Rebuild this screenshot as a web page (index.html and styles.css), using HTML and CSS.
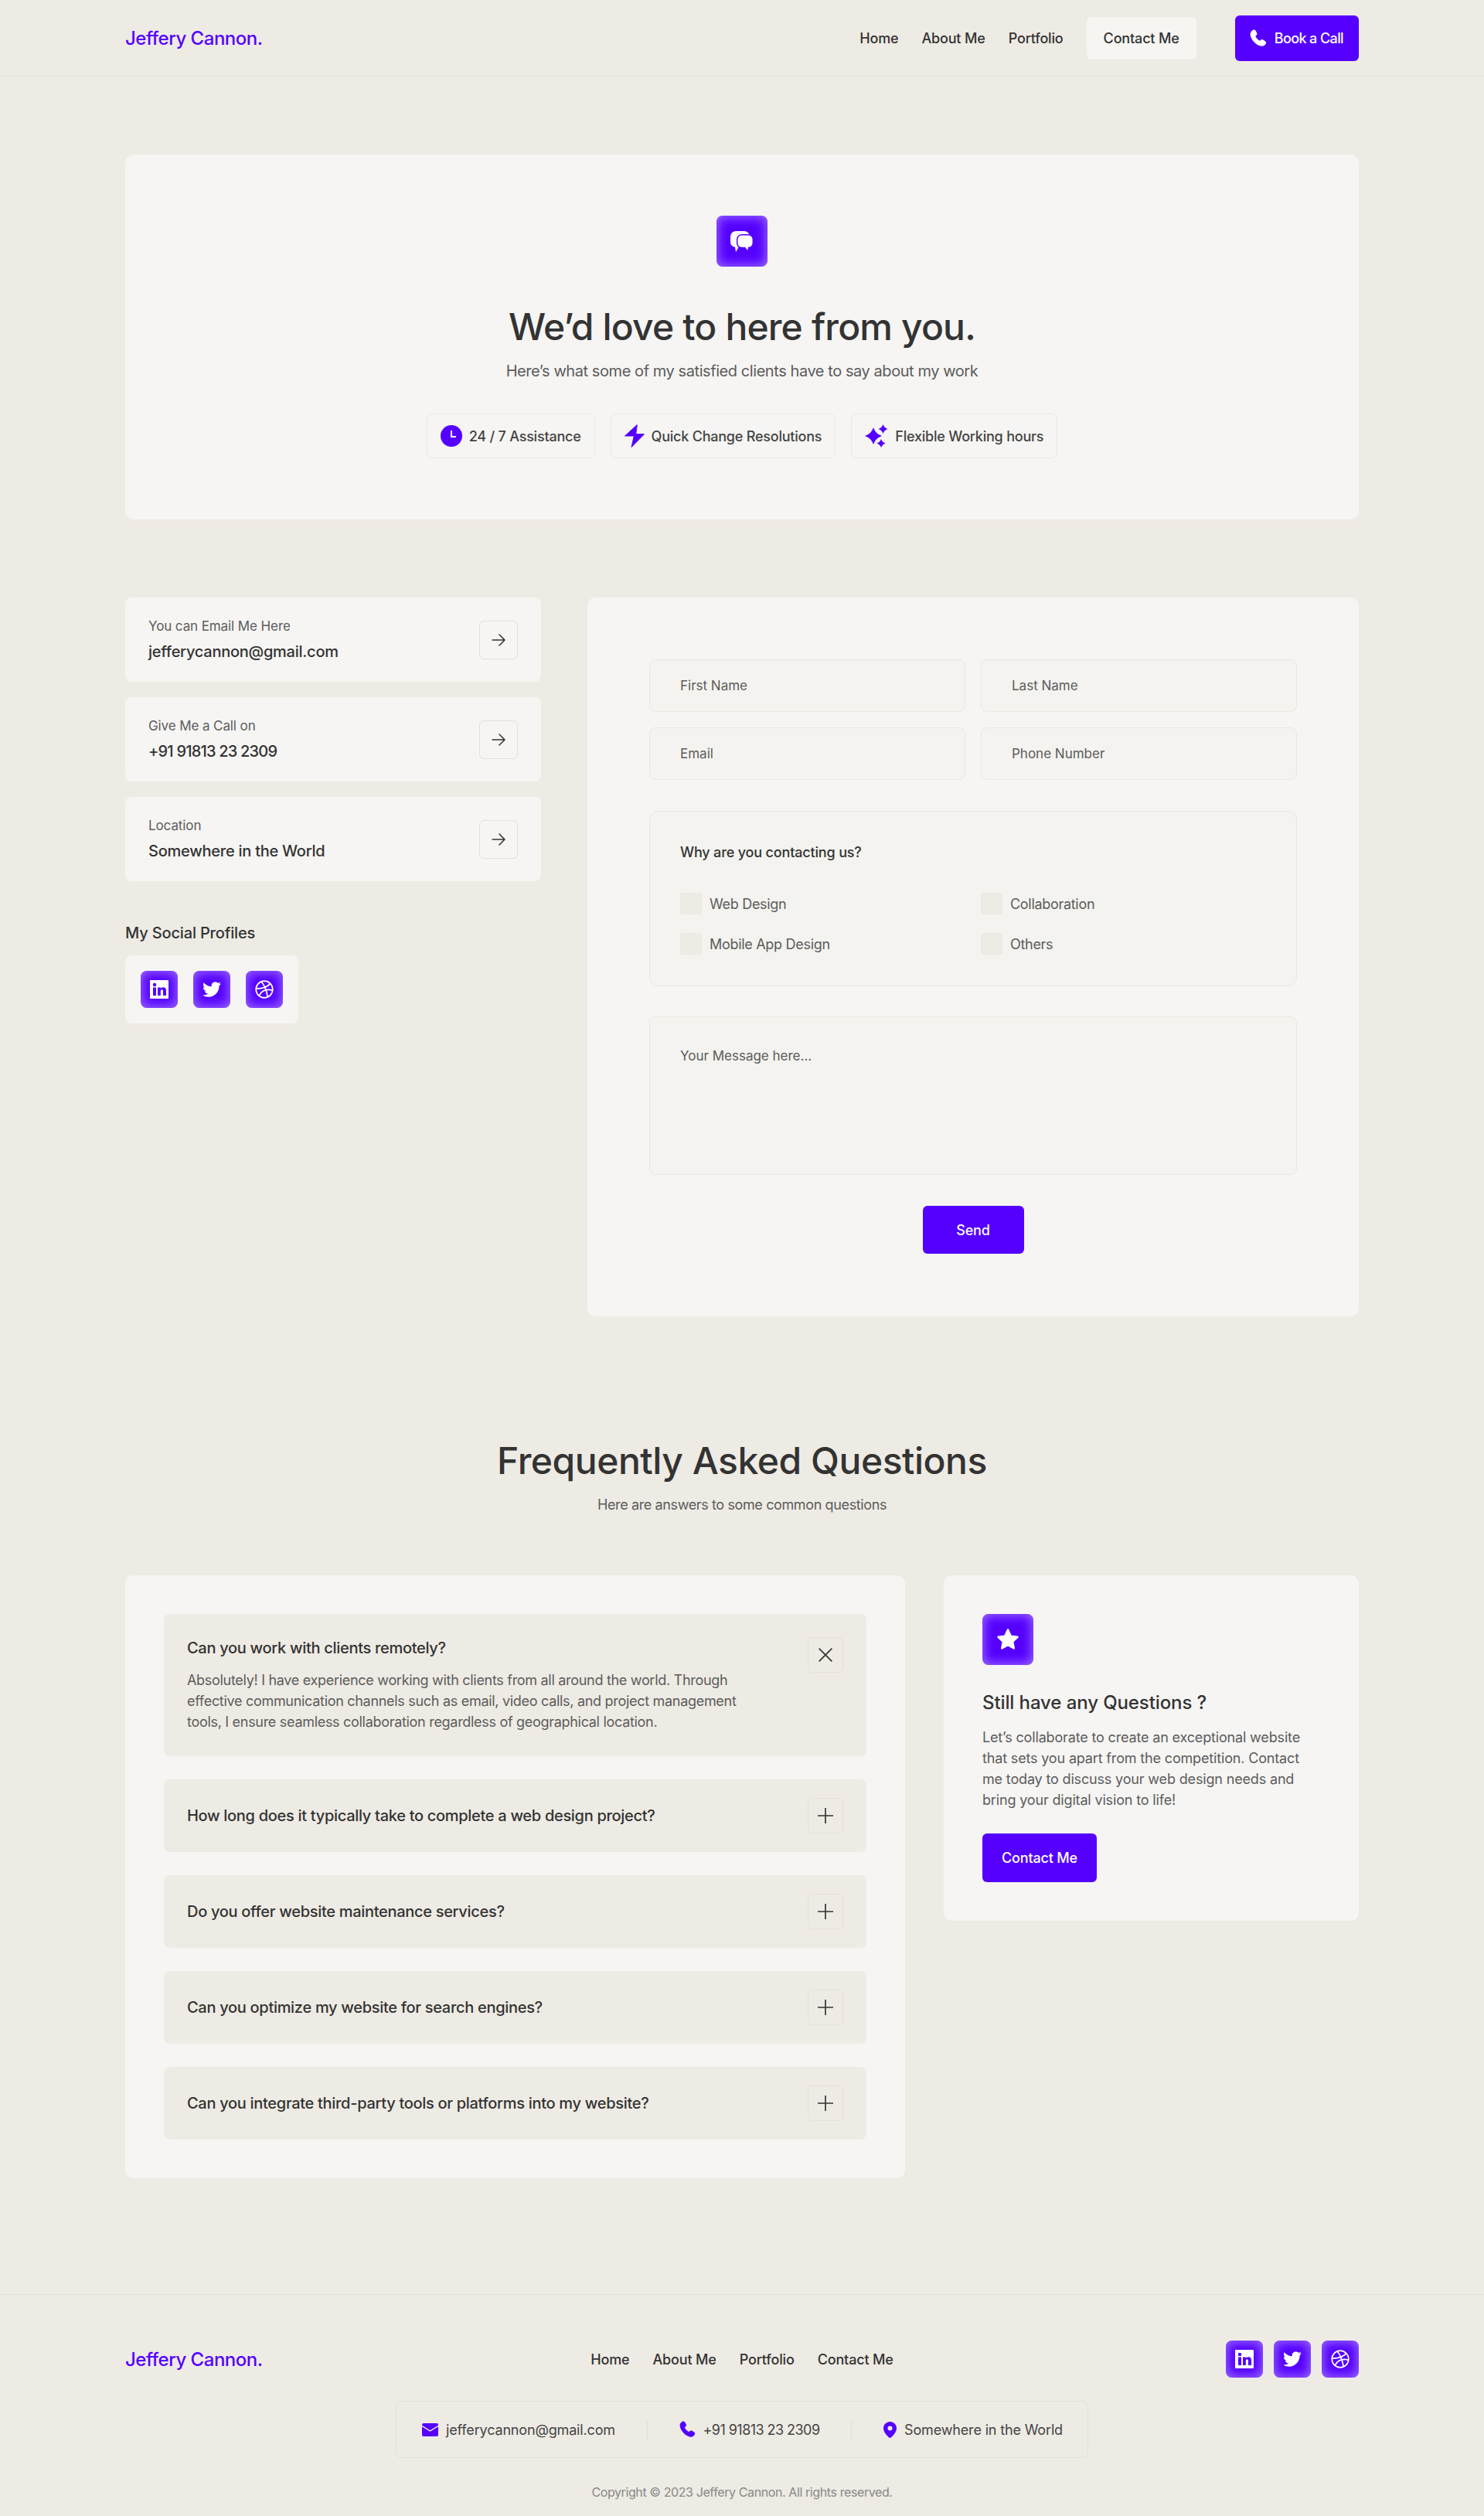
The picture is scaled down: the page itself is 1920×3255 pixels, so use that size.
FILE: index.html
```html
<!DOCTYPE html>
<html lang="en">
<head>
<meta charset="utf-8">
<title>Jeffery Cannon - Contact</title>
<link rel="stylesheet" href="styles.css">
</head>
<body>
<svg class="defs" aria-hidden="true">
  <defs>
    <symbol id="phone" viewBox="3 1.500 19 20"><path d="M6.600 2.200c1-.6 2.300-.2 2.900.8l1.300 2.400c.5 1 .3 2.100-.5 2.800l-1.100 1c1 2.100 2.700 4 4.900 5.200l1.100-1c.8-.7 1.800-.8 2.700-.2l2.400 1.500c1 .7 1.300 2 .6 3-1.200 1.900-3 3-5.100 2.600C9.900 19.200 4.600 13.500 3.500 7.700 3.100 5.500 4.600 3.200 6.600 2.200z"/></symbol>
    <symbol id="linkedin" viewBox="0 0 24 24"><rect width="24" height="24" rx="1" fill="#fff"/><g fill="#5500ff"><circle cx="6" cy="6" r="2.300"/><rect x="4" y="9.500" width="4" height="10.500"/><path d="M10 9.500h3.800v1.500c.7-1.100 2-1.800 3.400-1.800 2.800 0 3.800 1.800 3.800 4.500V20h-4v-5.600c0-1.300-.4-2.100-1.500-2.100-1.200 0-1.700.9-1.700 2.100V20H10z"/></g></symbol>
    <symbol id="twitter" viewBox="0 0 24 24"><path fill="#fff" d="M23.953 4.570a10 10 0 01-2.825.775 4.958 4.958 0 002.163-2.723c-.951.555-2.005.959-3.127 1.184a4.920 4.920 0 00-8.384 4.482C7.690 8.095 4.067 6.130 1.640 3.162a4.822 4.822 0 00-.666 2.475c0 1.710.870 3.213 2.188 4.096a4.904 4.904 0 01-2.228-.616v.060a4.923 4.923 0 003.946 4.827 4.996 4.996 0 01-2.212.085 4.936 4.936 0 004.604 3.417 9.867 9.867 0 01-6.102 2.105c-.390 0-.779-.023-1.170-.067a13.995 13.995 0 007.557 2.209c9.053 0 13.998-7.496 13.998-13.985 0-.210 0-.420-.015-.630A9.935 9.935 0 0024 4.590z"/></symbol>
    <symbol id="dribbble" viewBox="0 0 24 24"><g fill="none" stroke="#fff" stroke-width="1.700"><circle cx="12" cy="12" r="10.800"/><path d="M8 1.800c4 4.700 7 11.500 8.200 20"/><path d="M19.800 4.400c-3.200 4-9 6.600-18.300 6.800"/><path d="M22.700 13.200c-6.700-1.700-13.800-.2-17.500 7"/></g></symbol>
    <symbol id="arrow" viewBox="0 0 18 18"><path d="M1 9h16M10 2l7 7-7 7" fill="none" stroke="#333" stroke-width="1.500" stroke-linecap="round" stroke-linejoin="round"/></symbol>
    <symbol id="plus" viewBox="0 0 18 18"><path d="M9 0v18M0 9h18" fill="none" stroke="#333" stroke-width="1.500"/></symbol>
    <symbol id="close" viewBox="0 0 18 18"><path d="M1.500 1.500l15 15M16.500 1.500l-15 15" fill="none" stroke="#333" stroke-width="1.500"/></symbol>
  </defs>
</svg>

<header class="topbar">
  <a class="logo">Jeffery Cannon.</a>
  <nav class="topnav">
    <a class="navlink">Home</a>
    <a class="navlink">About Me</a>
    <a class="navlink">Portfolio</a>
    <a class="navlink navlink-active">Contact Me</a>
  </nav>
  <a class="bookbtn"><svg class="book-ico"><use href="#phone" fill="#fff"/></svg>Book a Call</a>
</header>

<main class="page">
  <section class="hero">
    <div class="tile tile-lg">
      <svg class="chat-ico" viewBox="0 0 30 27"><path fill="#fff" d="M7 0h11a7 7 0 017 7v7a7 7 0 01-7 7h-7.500L7 27l-1-6.300A7 7 0 010 14V7a7 7 0 017-7z"/><path fill="#fff" stroke="#5500ff" stroke-width="1.500" d="M14.500 4.800h9a5.800 5.800 0 015.800 5.800v5a5.800 5.800 0 01-5.800 5.800l-.6 5.300-4.300-5.300h-4.100a5.800 5.800 0 01-5.800-5.800v-5a5.800 5.800 0 015.800-5.800z"/></svg>
    </div>
    <h1 class="hero-title">We’d love to here from you.</h1>
    <p class="hero-sub">Here’s what some of my satisfied clients have to say about my work</p>
    <ul class="chips">
      <li class="chip"><svg class="chip-ico" viewBox="0 0 28 30"><circle cx="14" cy="15" r="14" fill="#5500ff"/><path d="M14 8v8h6" fill="none" stroke="#fff" stroke-width="2"/></svg>24 / 7 Assistance</li>
      <li class="chip"><svg class="chip-ico" viewBox="0 0 26 30"><path fill="#5500ff" stroke="#5500ff" stroke-linejoin="round" d="M16.300.5L.5 15h11.800L9 29.500 25.500 12.700H14.700z"/></svg>Quick Change Resolutions</li>
      <li class="chip"><svg class="chip-ico" viewBox="0 0 30 30"><path fill="#5500ff" d="M11 4Q13.700 12.300 22 15 13.700 17.700 11 26 8.300 17.700 0 15 8.300 12.300 11 4zM23.500 0Q25 4.500 29.500 6 25 7.500 23.500 12 22 7.500 17.500 6 22 4.500 23.500 0zM21 19Q22.400 23 26.500 24.500 22.400 26 21 30 19.600 26 15.500 24.500 19.600 23 21 19z"/></svg>Flexible Working hours</li>
    </ul>
  </section>

  <section class="contact">
    <aside class="contact-side">
      <a class="info">
        <div class="info-text"><span class="info-label">You can Email Me Here</span><span class="info-value">jefferycannon@gmail.com</span></div>
        <span class="iconbtn iconbtn-info"><svg class="arrow-ico"><use href="#arrow"/></svg></span>
      </a>
      <a class="info">
        <div class="info-text"><span class="info-label">Give Me a Call on</span><span class="info-value info-num">+91 91813 23 2309</span></div>
        <span class="iconbtn iconbtn-info"><svg class="arrow-ico"><use href="#arrow"/></svg></span>
      </a>
      <a class="info">
        <div class="info-text"><span class="info-label">Location</span><span class="info-value">Somewhere in the World</span></div>
        <span class="iconbtn iconbtn-info"><svg class="arrow-ico"><use href="#arrow"/></svg></span>
      </a>
      <h2 class="social-head">My Social Profiles</h2>
      <div class="social-box">
        <a class="tile tile-sm"><svg class="soc-ico soc-in"><use href="#linkedin"/></svg></a>
        <a class="tile tile-sm"><svg class="soc-ico"><use href="#twitter"/></svg></a>
        <a class="tile tile-sm"><svg class="soc-ico"><use href="#dribbble"/></svg></a>
      </div>
    </aside>

    <form class="form">
      <div class="form-grid">
        <input class="field" type="text" placeholder="First Name">
        <input class="field" type="text" placeholder="Last Name">
        <input class="field" type="text" placeholder="Email">
        <input class="field" type="text" placeholder="Phone Number">
      </div>
      <fieldset class="reasons">
        <legend class="reasons-title">Why are you contacting us?</legend>
        <div class="reasons-grid">
          <label class="check"><input class="box" type="checkbox">Web Design</label>
          <label class="check"><input class="box" type="checkbox">Collaboration</label>
          <label class="check"><input class="box" type="checkbox">Mobile App Design</label>
          <label class="check"><input class="box" type="checkbox">Others</label>
        </div>
      </fieldset>
      <textarea class="message" placeholder="Your Message here..."></textarea>
      <button class="btn btn-send" type="button">Send</button>
    </form>
  </section>

  <section class="faq">
    <h2 class="faq-title">Frequently Asked Questions</h2>
    <p class="faq-sub">Here are answers to some common questions</p>
    <div class="faq-cols">
      <div class="faq-list">
        <article class="qa qa-open">
          <div class="qa-body">
            <h3 class="q">Can you work with clients remotely?</h3>
            <p class="a">Absolutely! I have experience working with clients from all around the world. Through effective communication channels such as email, video calls, and project management tools, I ensure seamless collaboration regardless of geographical location.</p>
          </div>
          <span class="iconbtn"><svg class="pm-ico"><use href="#close"/></svg></span>
        </article>
        <article class="qa">
          <h3 class="q">How long does it typically take to complete a web design project?</h3>
          <span class="iconbtn"><svg class="pm-ico"><use href="#plus"/></svg></span>
        </article>
        <article class="qa">
          <h3 class="q">Do you offer website maintenance services?</h3>
          <span class="iconbtn"><svg class="pm-ico"><use href="#plus"/></svg></span>
        </article>
        <article class="qa">
          <h3 class="q">Can you optimize my website for search engines?</h3>
          <span class="iconbtn"><svg class="pm-ico"><use href="#plus"/></svg></span>
        </article>
        <article class="qa">
          <h3 class="q">Can you integrate third-party tools or platforms into my website?</h3>
          <span class="iconbtn"><svg class="pm-ico"><use href="#plus"/></svg></span>
        </article>
      </div>
      <aside class="ask">
        <div class="tile tile-lg tile-ask"><svg class="star-ico" viewBox="0 0 24 24"><path fill="#fff" stroke="#fff" stroke-width="2" stroke-linejoin="round" d="M12 2l3 6.500 7 .9-5.100 4.800 1.300 7L12 17.800l-6.200 3.400 1.300-7L2 9.400l7-.9z"/></svg></div>
        <h3 class="ask-title">Still have any Questions ?</h3>
        <p class="ask-text">Let’s collaborate to create an exceptional website that sets you apart from the competition. Contact me today to discuss your web design needs and bring your digital vision to life!</p>
        <button class="btn btn-ask" type="button">Contact Me</button>
      </aside>
    </div>
  </section>
</main>

<footer class="footer">
  <div class="foot-row">
    <a class="logo">Jeffery Cannon.</a>
    <nav class="footnav">
      <a class="footlink">Home</a>
      <a class="footlink">About Me</a>
      <a class="footlink">Portfolio</a>
      <a class="footlink">Contact Me</a>
    </nav>
    <div class="foot-social">
      <a class="tile tile-sm"><svg class="soc-ico soc-in"><use href="#linkedin"/></svg></a>
      <a class="tile tile-sm"><svg class="soc-ico"><use href="#twitter"/></svg></a>
      <a class="tile tile-sm"><svg class="soc-ico"><use href="#dribbble"/></svg></a>
    </div>
  </div>
  <div class="foot-contact">
    <span class="fc"><svg class="fc-ico fc-mail" viewBox="0 0 21 17"><path fill="#5500ff" d="M2 0h17a2 2 0 012 2v13a2 2 0 01-2 2H2a2 2 0 01-2-2V2a2 2 0 012-2z"/><path d="M0 3.500l10.500 6.500L21 3.500" fill="none" stroke="#fff" stroke-width="1.300"/></svg>jefferycannon@gmail.com</span>
    <span class="fc-sep"></span>
    <span class="fc fc-num"><svg class="fc-ico fc-phone"><use href="#phone" fill="#5500ff"/></svg>+91 91813 23 2309</span>
    <span class="fc-sep"></span>
    <span class="fc"><svg class="fc-ico fc-pin" viewBox="0 0 17 21"><path fill="#5500ff" fill-rule="evenodd" d="M8.500 0C13.200 0 17 3.700 17 8.400c0 5.200-5.500 10.600-7.400 12.200-.6.500-1.600.5-2.200 0C5.500 19 0 13.600 0 8.400 0 3.700 3.800 0 8.500 0zm0 5.500a3 3 0 100 6 3 3 0 000-6z"/></svg>Somewhere in the World</span>
  </div>
  <p class="copy">Copyright © 2023 Jeffery Cannon. All rights reserved.</p>
</footer>
</body>
</html>
```

FILE: styles.css
```css
* { box-sizing: border-box; }
html, body { margin: 0; padding: 0; }
body {
  background: #eeebe4;
  color: #333;
  font-family: "Inter", "Liberation Sans", sans-serif;
  font-size: 16px;
  letter-spacing: -0.01em;
}
h1, h2, h3, p, ul { margin: 0; padding: 0; }
ul { list-style: none; }
.defs { position: absolute; width: 0; height: 0; }

/* top bar */
.topbar {
  display: flex;
  align-items: center;
  height: 99px;
  padding: 0 162px;
  border-bottom: 1px solid #e3e0d9;
}
.logo {
  color: #5500ff;
  font-size: 24px;
  font-weight: 500;
  letter-spacing: -0.02em;
  white-space: nowrap;
}
.topnav {
  display: flex;
  align-items: center;
  margin-left: auto;
  gap: 30px;
}
.navlink { font-size: 18px; font-weight: 450; color: #333; }
.navlink-active {
  display: flex;
  align-items: center;
  height: 55px;
  padding: 0 22px;
  background: #f6f5f2;
  border-radius: 6px;
}
.bookbtn {
  display: flex;
  align-items: center;
  gap: 10px;
  height: 59px;
  margin-left: 50px;
  padding: 0 20px 0 19px;
  background: #5500ff;
  border-radius: 6px;
  color: #fff;
  font-size: 18px;
  font-weight: 450;
  letter-spacing: -0.6px;
}
.book-ico { width: 22px; height: 23px; }

.page { padding: 101px 162px 150px; }

/* gradient tile */
.tile {
  display: flex;
  align-items: center;
  justify-content: center;
  flex: none;
  background: #5500ff;
  box-shadow: inset 0 0 14px 2px rgba(255, 255, 255, .42);
}
.tile-lg { width: 66px; height: 66px; border-radius: 8px; }
.tile-sm { width: 48px; height: 48px; border-radius: 8px; }
.chat-ico { width: 30px; height: 27px; }
.star-ico { width: 30px; height: 30px; }
.soc-ico { width: 24px; height: 24px; }

/* hero */
.hero {
  display: flex;
  flex-direction: column;
  align-items: center;
  height: 472px;
  padding-top: 79px;
  background: #f6f5f3;
  border-radius: 10px;
}
.hero-title {
  margin-top: 46px;
  font-size: 48px;
  line-height: 64px;
  font-weight: 550;
  letter-spacing: -0.83px;
  color: #333;
}
.hero-sub { margin-top: 9px; font-size: 20px; line-height: 32px; letter-spacing: -0.43px; color: #5c5c5c; }
.chips { display: flex; gap: 20px; margin-top: 39px; }
.chip {
  display: flex;
  align-items: center;
  gap: 9px;
  height: 58px;
  padding: 0 17px;
  border: 1px solid #ebe8e2;
  border-radius: 8px;
  font-size: 18px;
  font-weight: 450;
  letter-spacing: -0.22px;
  color: #444;
}
.chip-ico { height: 30px; width: auto; flex: none; }

/* contact */
.contact {
  display: grid;
  grid-template-columns: 538px 998px;
  gap: 60px;
  align-items: start;
  margin-top: 101px;
}
.contact-side { display: flex; flex-direction: column; }
.info {
  display: flex;
  align-items: center;
  justify-content: space-between;
  height: 109px;
  margin-bottom: 20px;
  padding: 0 30px;
  background: #f6f5f3;
  border-radius: 8px;
}
.info-text { display: flex; flex-direction: column; gap: 6px; }
.info-label { font-size: 17px; line-height: 24px; letter-spacing: -0.1px; color: #5c5c5c; }
.info-value { font-size: 20px; line-height: 30px; font-weight: 450; letter-spacing: -0.25px; color: #333; }
.info-num { letter-spacing: -0.8px; }
.iconbtn {
  display: flex;
  align-items: center;
  justify-content: center;
  flex: none;
  width: 46px;
  height: 46px;
  border: 1px solid #e5e1d9;
  border-radius: 6px;
}
.iconbtn-info { width: 50px; height: 50px; background: #f6f5f3; }
.arrow-ico { width: 18px; height: 18px; }
.pm-ico { width: 20px; height: 20px; }
.social-head {
  margin-top: 32px;
  font-size: 20px;
  line-height: 30px;
  font-weight: 450;
  color: #333;
}
.social-box {
  display: flex;
  align-self: flex-start;
  gap: 20px;
  margin-top: 14px;
  padding: 20px;
  background: #f6f5f3;
  border-radius: 8px;
}

/* form */
.form {
  display: flex;
  flex-direction: column;
  align-items: center;
  height: 930px;
  padding: 80px;
  background: #f6f5f3;
  border-radius: 10px;
}
.form-grid {
  display: grid;
  grid-template-columns: 1fr 1fr;
  gap: 20px;
  width: 100%;
}
.field, .message {
  width: 100%;
  background: #f4f3ef;
  border: 1px solid #ebe8e2;
  border-radius: 8px;
  font: inherit;
  font-size: 17px;
  letter-spacing: 0;
  color: #555;
  outline: none;
}
.field { height: 68px; padding: 0 39px; }
.field::placeholder, .message::placeholder { color: #5c5c5c; opacity: 1; }
.reasons {
  display: block;
  width: 100%;
  height: 227px;
  margin: 40px 0 0;
  padding: 39px 39px 0;
  background: #f4f3ef;
  border: 1px solid #ebe8e2;
  border-radius: 12px;
}
.reasons-title {
  float: left;
  width: 100%;
  padding: 0;
  font-size: 18px;
  line-height: 28px;
  font-weight: 450;
  color: #333;
}
.reasons-grid {
  clear: both;
  display: grid;
  grid-template-columns: 389px 1fr;
  row-gap: 24px;
  padding-top: 38px;
}
.check { display: flex; align-items: center; gap: 10px; color: #5c5c5c; font-size: 18px; letter-spacing: -0.3px; }
.box {
  appearance: none;
  width: 28px;
  height: 28px;
  margin: 0;
  background: #eeebe4;
  border: 1px solid #ebe8e2;
  border-radius: 4px;
}
.message {
  display: block;
  height: 205px;
  margin-top: 39px;
  padding: 40px 39px;
  resize: none;
}
.btn {
  display: block;
  background: #5500ff;
  border: 0;
  border-radius: 6px;
  color: #fff;
  font: inherit;
  font-size: 18px;
  font-weight: 450;
  letter-spacing: inherit;
}
.btn-send { width: 131px; height: 62px; margin-top: 40px; }
.btn-ask { width: 148px; height: 63px; margin-top: 30px; }

/* faq */
.faq { margin-top: 0; padding-top: 153px; }
.faq-title {
  font-size: 48px;
  line-height: 68px;
  font-weight: 550;
  letter-spacing: -0.46px;
  text-align: center;
  color: #333;
}
.faq-sub {
  margin-top: 9px;
  font-size: 18px;
  line-height: 28px;
  letter-spacing: -0.38px;
  text-align: center;
  color: #5c5c5c;
}
.faq-cols {
  display: grid;
  grid-template-columns: 1009px 537px;
  gap: 50px;
  align-items: start;
  margin-top: 77px;
}
.faq-list {
  display: flex;
  flex-direction: column;
  gap: 30px;
  padding: 50px;
  background: #f6f5f3;
  border-radius: 10px;
}
.qa {
  display: flex;
  align-items: center;
  justify-content: space-between;
  height: 94px;
  padding: 0 30px;
  background: #eeebe4;
  border-radius: 8px;
}
.qa-open { align-items: flex-start; height: 184px; padding-top: 30px; }
.qa-body { width: 730px; }
.q { font-size: 20px; line-height: 28px; font-weight: 450; letter-spacing: -0.3px; color: #333; }
.a { margin-top: 14px; font-size: 18px; line-height: 27px; letter-spacing: -0.3px; color: #5c5c5c; }
.ask {
  padding: 50px;
  background: #f6f5f3;
  border-radius: 10px;
}
.ask-title { margin-top: 33px; font-size: 24px; line-height: 32px; font-weight: 500; letter-spacing: -0.1px; color: #333; }
.ask-text { margin-top: 15px; font-size: 18px; line-height: 27px; color: #5c5c5c; }

/* footer */
.footer { border-top: 1px solid #e3e0d9; padding: 59px 162px 0; }
.foot-row { display: grid; grid-template-columns: 1fr auto 1fr; align-items: center; }
.footnav { display: flex; gap: 30px; }
.footlink { font-size: 18px; font-weight: 450; color: #333; }
.foot-social { display: flex; gap: 14px; justify-content: flex-end; }
.foot-contact {
  display: flex;
  align-items: center;
  justify-content: space-between;
  width: 896px;
  height: 74px;
  margin: 30px auto 0;
  padding: 0 32px 0 33px;
  border: 1px solid #e3e0d9;
  border-radius: 8px;
}
.fc { display: flex; align-items: center; gap: 10px; font-size: 18px; color: #444; }
.fc-num { letter-spacing: -0.55px; }
.fc-ico { flex: none; }
.fc-mail { width: 21px; height: 17px; }
.fc-phone { width: 21px; height: 22px; }
.fc-pin { width: 17px; height: 21px; }
.fc-sep { width: 1px; height: 27px; background: #e3e0d9; }
.copy { margin-top: 32px; text-align: center; font-size: 16px; line-height: 24px; letter-spacing: -0.4px; color: #888; }
```
